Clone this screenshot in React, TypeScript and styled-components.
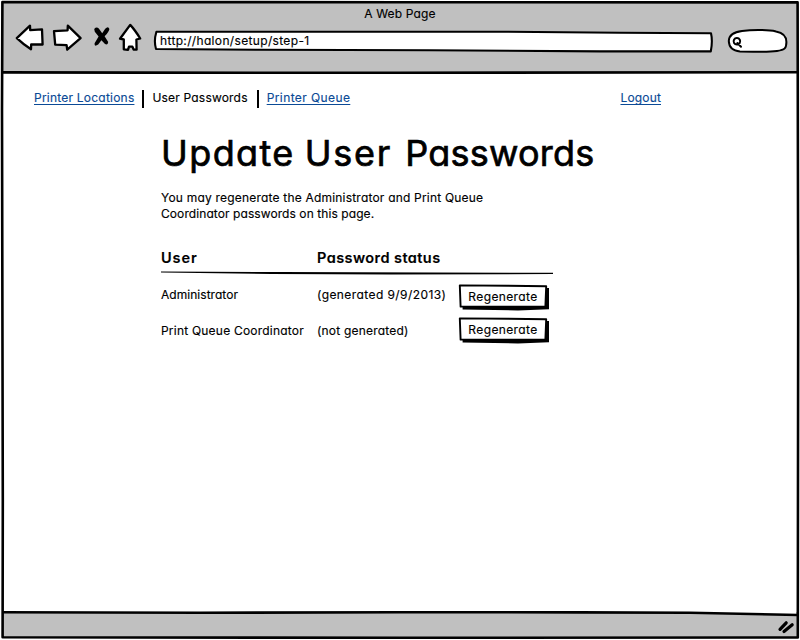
import React from 'react';
import styled, { createGlobalStyle } from 'styled-components';

const GlobalStyle = createGlobalStyle`
  * { box-sizing: border-box; }
  body {
    margin: 0;
    background: #fff;
    color: #000;
    font: 400 12px/16px Inter, "Liberation Sans", sans-serif;
    font-feature-settings: "cv11";
    -webkit-text-stroke: 0.15px currentColor;
  }
`;

const Window = styled.div`
  position: relative;
  display: flex;
  flex-direction: column;
  width: 800px;
  height: 640px;
  padding: 2px;
  overflow: hidden;
`;

const Chrome = styled.header`
  height: 71px;
  padding-top: 4px;
  background: #c0c0c0;
`;

const WindowTitle = styled.div`
  height: 17px;
  text-align: center;
  letter-spacing: 0.15px;
`;

const Toolbar = styled.div`
  display: flex;
  align-items: flex-start;
  padding-left: 13px;
`;

const NavIcons = styled.svg`
  flex: none;
  width: 128px;
  height: 30px;
  margin-right: 9px;
`;

const Field = styled.div<{ $width: number }>`
  position: relative;
  flex: none;
  width: ${p => p.$width}px;
  height: 30px;
  padding: 10px 8px 0;
  margin-right: 12px;
`;

const FieldInk = styled.svg`
  position: absolute;
  inset: 0;
  width: 100%;
  height: 100%;
`;

const Address = styled.span`
  position: relative;
  display: block;
  letter-spacing: 0.34px;
`;

const Page = styled.main`
  flex: 1;
  padding: 17px 0 0 32px;
`;

const Nav = styled.nav`
  display: flex;
  width: 627px;
  height: 18px;
`;

const NavItem = styled.span<{ $spacing: number; $push?: boolean }>`
  letter-spacing: ${p => p.$spacing}px;
  margin-left: ${p => (p.$push ? 'auto' : '0')};
`;

const NavLink = styled(NavItem).attrs({ as: 'a' })`
  color: #0b4a96;
  text-decoration: underline 1px;
  text-underline-offset: 2px;
  text-decoration-skip-ink: none;
  cursor: pointer;
`;

const Divider = styled.span<{ $left: number }>`
  width: 2px;
  height: 18px;
  margin: 0 8px 0 ${p => p.$left}px;
  background: #000;
`;

const Content = styled.section`
  width: 450px;
  margin: 23px 0 0 127px;
`;

const Heading = styled.h1`
  margin: 0 0 15px;
  font-size: 36px;
  font-weight: 400;
  line-height: 44px;
  white-space: nowrap;
  -webkit-text-stroke: 0.7px #000;
  stroke-linejoin: round;
`;

const Word = styled.span<{ $spacing: number; $left?: number }>`
  margin-left: ${p => p.$left ?? 0}px;
  letter-spacing: ${p => p.$spacing}px;
`;

const Line = styled.div<{ $spacing: number }>`
  letter-spacing: ${p => p.$spacing}px;
  white-space: nowrap;
`;

const Row = styled.div<{ $height: number }>`
  display: grid;
  grid-template-columns: 156px 141px 92px;
  align-items: start;
  height: ${p => p.$height}px;
`;

const HeadCell = styled.strong<{ $spacing: number }>`
  font-size: 14.5px;
  font-weight: 600;
  line-height: 18px;
  letter-spacing: ${p => p.$spacing}px;
`;

const Cell = styled.span<{ $spacing: number; $top: number }>`
  padding-top: ${p => p.$top}px;
  letter-spacing: ${p => p.$spacing}px;
  white-space: nowrap;
`;

const Table = styled.div`
  padding-top: 27px;
`;

const Rule = styled.svg`
  display: block;
  width: 392px;
  height: 4px;
`;

const ButtonBox = styled.button`
  position: relative;
  width: 92px;
  height: 28px;
  padding: 0 2px 3px 0;
  border: 0;
  background: none;
  color: inherit;
  font: inherit;
  font-feature-settings: inherit;
  letter-spacing: 0.38px;
  -webkit-text-stroke: inherit;
`;

const ButtonLabel = styled.span`
  position: relative;
`;

const StatusBar = styled.footer`
  height: 26px;
  background: #c0c0c0;
`;

const FrameInk = styled.svg`
  position: absolute;
  inset: 0;
  width: 800px;
  height: 640px;
  pointer-events: none;
`;

function RegenerateButton() {
  return (
    <ButtonBox>
      <FieldInk viewBox="0 0 92 28">
        <path d="M4.6 4 H90 L91 4 V25.2 L60 26.4 L4.6 25.6Z" fill="#000" />
        <path d="M1.8 1.4 L50 1.7 L88.2 2.2 L87.4 22.4 L45 22.8 L2.6 22.6Z" fill="#fff" stroke="#000" strokeWidth="1.9" strokeLinejoin="round" />
      </FieldInk>
      <ButtonLabel>Regenerate</ButtonLabel>
    </ButtonBox>
  );
}

export default function App() {
  return (
    <>
      <GlobalStyle />
      <Window>
        <Chrome>
          <WindowTitle>A Web Page</WindowTitle>
          <Toolbar>
            <NavIcons viewBox="15 22.5 128 30">
              <g fill="#fff" stroke="#000" strokeWidth="2.3" strokeLinejoin="round">
                <path d="M16.8 37.6 L30 25.2 L30.2 29.6 L42 28.8 L42.6 44 L31.2 43.8 L31 48.8 Q23 43.5 16.8 37.6Z" />
                <path d="M54 30.6 L67.6 29.8 L67.8 25.2 L80.6 37.6 L67.2 49.2 L66.6 44.6 L55.2 44.2Z" />
                <path d="M130.2 24.4 Q134.6 29 140.2 38 L136.4 39 L136.6 49.2 L133.6 49 L132.4 46.2 L129 46.2 L128 49.4 L123.8 48.8 L123.8 39 L120 38.2Z" />
              </g>
              <path d="M94.2 28.4 Q96.6 25.8 98.8 28 L102.2 32.8 L105.2 28.2 Q108.2 25 109.4 28.4 Q109 31.4 104.6 35.8 L108.2 41.4 Q107.8 45 105 43.6 L101.4 39.8 L98.2 44 Q94 46.8 94.6 42.8 L98.6 36 L94.8 31.2Z" fill="#000" />
            </NavIcons>
            <Field $width={562}>
              <FieldInk viewBox="152 23 562 30">
                <path d="M156.4 31.8 L300 31.8 L500 31.7 L620 32.8 L711 33.3 Q712.8 41 710.8 51.4 L600 51.4 L430 50.2 L260 49.8 L156 49 Q153.6 41 156.4 31.8Z" fill="#fff" stroke="#000" strokeWidth="2.1" strokeLinejoin="round" />
              </FieldInk>
              <Address>http://halon/setup/step-1</Address>
            </Field>
            <Field $width={62}>
              <FieldInk viewBox="726 23 62 30" overflow="visible">
                <path d="M728.8 41 C729 35 734 32 742 31 C752 29.6 768 29.6 776 31.4 C784 32.8 786.4 37 786.4 42 C786.4 48.2 785 49.8 777 51 C766 52.6 758 51.6 740 51.4 C733 50.8 729 47 728.8 41Z" fill="#fff" stroke="#000" strokeWidth="2" />
                <path d="M736.8 38 a3.3 3.3 0 1 0 .2 0Z M737.4 43 L741 46.8" fill="none" stroke="#000" strokeWidth="2" strokeLinecap="round" />
              </FieldInk>
            </Field>
          </Toolbar>
        </Chrome>

        <Page>
          <Nav>
            <NavLink $spacing={0.22}>Printer Locations</NavLink>
            <Divider $left={8} />
            <NavItem $spacing={0.19}>User Passwords</NavItem>
            <Divider $left={9} />
            <NavLink $spacing={0.4}>Printer Queue</NavLink>
            <NavLink $spacing={0.16} $push>Logout</NavLink>
          </Nav>

          <Content>
            <Heading>
              <Word $spacing={1.4}>Update</Word> <Word $spacing={1.7}>User</Word>{' '}
              <Word $spacing={0.25} $left={3}>Passwords</Word>
            </Heading>
            <Line $spacing={0.2}>You may regenerate the Administrator and Print Queue</Line>
            <Line $spacing={0.08}>Coordinator passwords on this page.</Line>
            <Table>
              <Row $height={22}>
                <HeadCell $spacing={0.95}>User</HeadCell>
                <HeadCell $spacing={0.43}>Password status</HeadCell>
              </Row>
              <Rule viewBox="0 0 392 4">
                <path d="M0 .6 L120 1 L392 1.8 V3.1 L230 3.5 L110 3 L0 1.5Z" />
              </Rule>
              <Row $height={42}>
                <Cell $spacing={0.04} $top={12}>Administrator</Cell>
                <Cell $spacing={0.42} $top={12}>(generated 9/9/2013)</Cell>
                <Cell $spacing={0} $top={9}><RegenerateButton /></Cell>
              </Row>
              <Row $height={36}>
                <Cell $spacing={0.21} $top={6}>Print Queue Coordinator</Cell>
                <Cell $spacing={0.2} $top={6}>(not generated)</Cell>
                <Cell $spacing={0} $top={0}><RegenerateButton /></Cell>
              </Row>
            </Table>
          </Content>
        </Page>

        <StatusBar />

        <FrameInk viewBox="0 0 800 640">
          <path d="M4 611 L380 611 L560 611.4 L796 614 V600 H4Z" fill="#fff" />
          <g fill="none" stroke="#000" strokeWidth="2.6" strokeLinejoin="round">
            <path d="M2.4 2 L400 2.2 L797.6 2.4 L798.2 300 L797.8 637.4 L400 637.8 L2.6 637.2 L2.8 500 L2 110 Z" />
            <path d="M2 72.4 L140 72.6 L400 72.8 L798 72.2" />
            <path d="M2 612.2 L200 612.8 L400 612.2 L580 612.4 L690 612.8 L798 615" />
          </g>
          <g stroke="#000" strokeWidth="3.2" strokeLinecap="round">
            <path d="M780 629.4 L786.2 622.8" />
            <path d="M784 631.6 L792.2 624.8" />
          </g>
        </FrameInk>
      </Window>
    </>
  );
}
